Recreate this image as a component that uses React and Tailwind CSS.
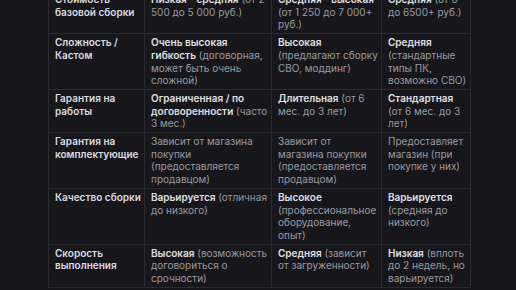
// each line: [bold part, regular part]
const rows = [
  {
    label: ['Стоимость', 'базовой сборки'],
    cells: [
      [['Низкая - средняя', ' (от 2'], ['', '500 до 5 000 руб.)']],
      [['Средняя - высокая', ''], ['', '(от 1 250 до 7 000+'], ['', 'руб.)']],
      [['Средняя', ' (от 0'], ['', 'до 6500+ руб.)']],
    ],
  },
  {
    label: ['Сложность /', 'Кастом'],
    cells: [
      [['Очень высокая', ''], ['гибкость', ' (договорная,'], ['', 'может быть очень'], ['', 'сложной)']],
      [['Высокая', ''], ['', '(предлагают сборку'], ['', 'СВО, моддинг)']],
      [['Средняя', ''], ['', '(стандартные'], ['', 'типы ПК,'], ['', 'возможно СВО)']],
    ],
  },
  {
    label: ['Гарантия на', 'работы'],
    cells: [
      [['Ограниченная / по', ''], ['договоренности', ' (часто'], ['', '3 мес.)']],
      [['Длительная', ' (от 6'], ['', 'мес. до 3 лет)']],
      [['Стандартная', ''], ['', '(от 6 мес. до 3'], ['', 'лет)']],
    ],
  },
  {
    label: ['Гарантия на', 'комплектующие'],
    cells: [
      [['', 'Зависит от магазина'], ['', 'покупки'], ['', '(предоставляется'], ['', 'продавцом)']],
      [['', 'Зависит от'], ['', 'магазина покупки'], ['', '(предоставляется'], ['', 'продавцом)']],
      [['', 'Предоставляет'], ['', 'магазин (при'], ['', 'покупке у них)']],
    ],
  },
  {
    label: ['Качество сборки'],
    cells: [
      [['Варьируется', ' (отличная'], ['', 'до низкого)']],
      [['Высокое', ''], ['', '(профессиональное'], ['', 'оборудование,'], ['', 'опыт)']],
      [['Варьируется', ''], ['', '(средняя до'], ['', 'низкого)']],
    ],
  },
  {
    label: ['Скорость', 'выполнения'],
    cells: [
      [['Высокая', ' (возможность'], ['', 'договориться о'], ['', 'срочности)']],
      [['Средняя', ' (зависит'], ['', 'от загруженности)']],
      [['Низкая', ' (вплоть'], ['', 'до 2 недель, но'], ['', 'варьируется)']],
    ],
  },
]

const widths = ['w-[96px]', 'w-[127px]', 'w-[110px]', 'w-[89px]']

export default function App() {
  return (
    <div className="w-[516px] h-[290px] overflow-hidden bg-[#17171b] font-['Inter','Noto_Sans',sans-serif] text-[10px] leading-[12.7px]">
      <div className="pl-[48px] -mt-[10px]">
        <table className="table-fixed border-collapse w-[422px]">
          <tbody>
            {rows.map((row) => (
              <tr key={row.label.join(' ')}>
                <td className={`${widths[0]} border border-[#2a2b30] px-[6px] py-[2px] align-top font-semibold text-[#dcdce0]`}>
                  {row.label.map((l) => (
                    <div key={l} className="whitespace-nowrap">{l}</div>
                  ))}
                </td>
                {row.cells.map((lines, i) => (
                  <td key={i} className={`${widths[i + 1]} border border-[#2a2b30] px-[6px] py-[2px] align-top text-[#9a9aa1]`}>
                    {lines.map(([bold, rest], j) => (
                      <div key={j} className="whitespace-nowrap">
                        {bold && <span className="font-semibold text-[#e0e0e4]">{bold}</span>}
                        {rest}
                      </div>
                    ))}
                  </td>
                ))}
              </tr>
            ))}
          </tbody>
        </table>
      </div>
    </div>
  )
}
